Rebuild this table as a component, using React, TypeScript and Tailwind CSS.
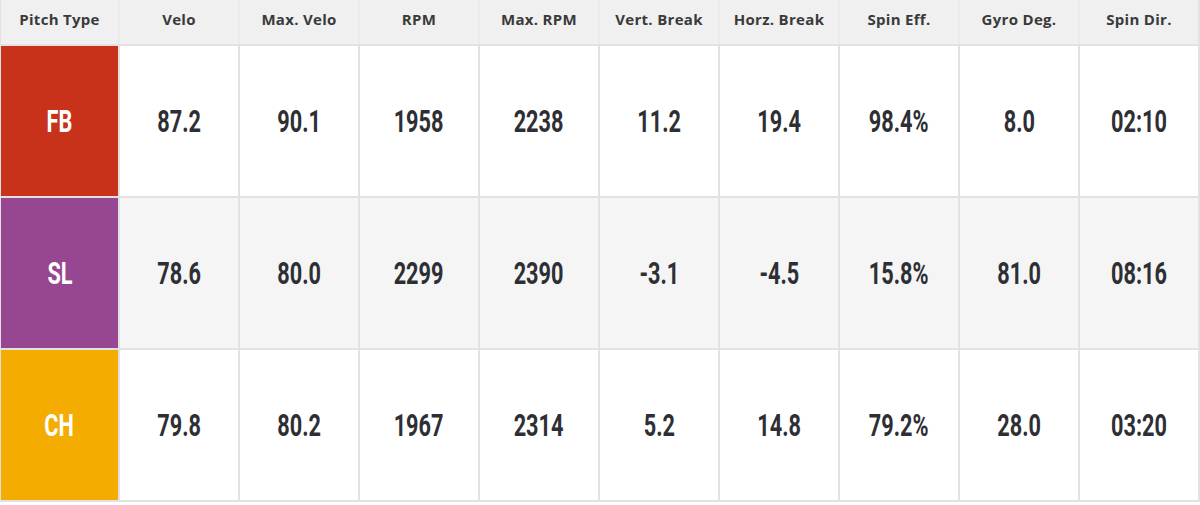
const HEADERS = [
  'Pitch Type',
  'Velo',
  'Max. Velo',
  'RPM',
  'Max. RPM',
  'Vert. Break',
  'Horz. Break',
  'Spin Eff.',
  'Gyro Deg.',
  'Spin Dir.',
];

const ROWS = [
  {
    pitch: 'FB',
    swatch: 'bg-[#c8321b]',
    bg: 'bg-white',
    values: ['87.2', '90.1', '1958', '2238', '11.2', '19.4', '98.4%', '8.0', '02:10'],
  },
  {
    pitch: 'SL',
    swatch: 'bg-[#974691]',
    bg: 'bg-[#f5f5f5]',
    values: ['78.6', '80.0', '2299', '2390', '-3.1', '-4.5', '15.8%', '81.0', '08:16'],
  },
  {
    pitch: 'CH',
    swatch: 'bg-[#f4ac00]',
    bg: 'bg-white',
    values: ['79.8', '80.2', '1967', '2314', '5.2', '14.8', '79.2%', '28.0', '03:20'],
  },
];

// Condensed display numerals: Roboto squeezed horizontally.
const NUM =
  "inline-block scale-x-[0.7] font-['Roboto',sans-serif] text-[31px] font-bold leading-none";

// Swatch column is a touch narrower than the data columns.
const COLS = 'grid grid-cols-[117px_repeat(9,minmax(0,1fr))] gap-x-[2px]';

export default function App() {
  return (
    <div className="h-[505px] w-[1200px] bg-white">
      <div className="flex flex-col gap-y-[2px] bg-[#e2e2e2] pb-[2px] pl-[1px] pr-[2px]">
        {/* Header row: separators are barely visible on the grey band. */}
        <div className={`${COLS} h-[44px] bg-[#ebebeb]`}>
          {HEADERS.map((h) => (
            <div
              key={h}
              className="flex items-center justify-center bg-[#f0f0f0] pb-[5px] font-['Open_Sans',sans-serif] text-[15px] font-bold tracking-[0.02em] text-[#3a3a3a]"
            >
              {h}
            </div>
          ))}
        </div>
        {ROWS.map((r) => (
          <div key={r.pitch} className={`${COLS} h-[150px]`}>
            <div className={`flex items-center justify-center ${r.swatch} text-white`}>
              <span className={NUM}>{r.pitch}</span>
            </div>
            {r.values.map((v, i) => (
              <div
                key={i}
                className={`flex items-center justify-center ${r.bg} text-[#2e2f34]`}
              >
                <span className={NUM}>{v}</span>
              </div>
            ))}
          </div>
        ))}
      </div>
    </div>
  );
}
